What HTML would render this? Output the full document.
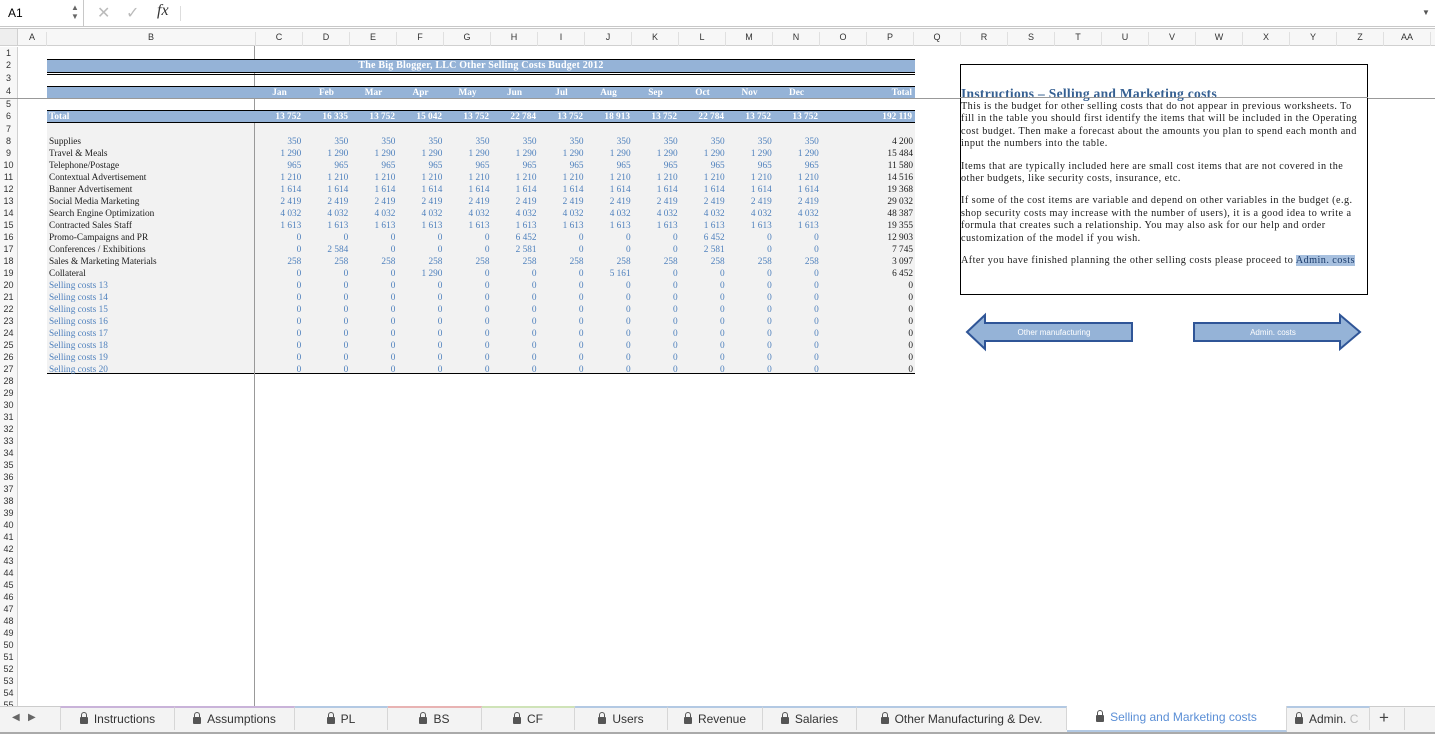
<!DOCTYPE html>
<html><head><meta charset="utf-8"><style>
*{margin:0;padding:0;box-sizing:border-box}
body{width:1435px;height:734px;overflow:hidden;background:#fff;position:relative;font-family:"Liberation Sans",sans-serif}
.a{position:absolute}
.top{left:0;top:0;width:1435px;height:27px;background:#fff;border-bottom:1px solid #c8c8c8}
.colh{left:0;top:28px;width:1435px;height:18px;background:#f7f7f7;border-bottom:1px solid #d0d0d0;border-top:1px solid #c8c8c8}
.colh span{position:absolute;top:3px;font-size:9px;color:#333;width:47px;text-align:center;border-right:1px solid #e0e0e0;height:14px}
.rowh{left:0;width:18px;font-size:9px;color:#333;text-align:center;background:#f7f7f7}
.band{background:#95b3d7;color:#fff;font-family:"Liberation Serif",serif;font-weight:bold;font-size:9.3px}
table{border-collapse:collapse;table-layout:fixed;font-family:"Liberation Serif",serif;font-size:9.3px}
td{height:12px;line-height:12px;padding:0 2px;text-align:right;white-space:nowrap;overflow:hidden;color:#4f81bd}
td.l{text-align:left;color:#1a1a1a}
td.lb{text-align:left;color:#4f81bd}
td.t{color:#1a1a1a}
.ins{font-family:"Liberation Serif",serif;font-size:10.2px;letter-spacing:0.45px;color:#1a1a1a;line-height:12.4px}
.tab{position:absolute;top:706px;height:24px;font-size:12px;color:#333;text-align:center;line-height:22px;border-right:1px solid #d6d6d6}
.lock{display:inline-block;width:8px;height:7px;background:#555;border-radius:1px;position:relative;margin-right:6px;vertical-align:-1px}
.lock:before{content:"";position:absolute;left:1px;top:-5px;width:4px;height:5px;border:1px solid #555;border-bottom:none;border-radius:3px 3px 0 0}
</style></head><body>
<div class="a top">
 <div class="a" style="left:0;top:0;width:84px;height:27px;border-right:1px solid #c8c8c8;font-size:12px;line-height:27px;padding-left:8px">A1</div>
 <div class="a" style="left:71px;top:3px;font-size:8px;color:#666;line-height:9px">▲<br>▼</div>
 <div class="a" style="left:97px;top:3px;font-size:16px;color:#bbb">✕</div>
 <div class="a" style="left:126px;top:3px;font-size:16px;color:#bbb">✓</div>
 <div class="a" style="left:157px;top:2px;font-size:16px;font-style:italic;font-family:'Liberation Serif',serif;color:#333">fx</div>
 <div class="a" style="left:180px;top:6px;width:1px;height:15px;background:#ddd"></div>
 <div class="a" style="left:1422px;top:8px;font-size:8px;color:#555">▼</div>
</div>
<div class="a colh">
 <div class="a" style="left:0;top:0;width:18px;height:16px;background:#eee;border-right:1px solid #d0d0d0"></div>
 <span style="left:18px;width:29px">A</span><span style="left:47px;width:209px">B</span>
 <span style="left:256px">C</span><span style="left:303px">D</span><span style="left:350px">E</span><span style="left:397px">F</span><span style="left:444px">G</span><span style="left:491px">H</span><span style="left:538px">I</span><span style="left:585px">J</span><span style="left:632px">K</span><span style="left:679px">L</span><span style="left:726px">M</span><span style="left:773px">N</span><span style="left:820px">O</span><span style="left:867px">P</span><span style="left:914px">Q</span><span style="left:961px">R</span><span style="left:1008px">S</span><span style="left:1055px">T</span><span style="left:1102px">U</span><span style="left:1149px">V</span><span style="left:1196px">W</span><span style="left:1243px">X</span><span style="left:1290px">Y</span><span style="left:1337px">Z</span><span style="left:1384px">AA</span>
</div>
<div class="a rowh" style="top:47px;height:660px;border-right:1px solid #d0d0d0;line-height:12px">
<div style="height:12px">1</div><div style="height:13px;line-height:13px">2</div><div style="height:13px;line-height:13px">3</div><div style="height:13px;line-height:13px">4</div><div style="height:12px">5</div><div style="height:13px;line-height:13px">6</div><div style="height:12px">7</div>
<div>8</div><div>9</div><div>10</div><div>11</div><div>12</div><div>13</div><div>14</div><div>15</div><div>16</div><div>17</div><div>18</div><div>19</div><div>20</div><div>21</div><div>22</div><div>23</div><div>24</div><div>25</div><div>26</div><div>27</div><div>28</div><div>29</div><div>30</div><div>31</div><div>32</div><div>33</div><div>34</div><div>35</div><div>36</div><div>37</div><div>38</div><div>39</div><div>40</div><div>41</div><div>42</div><div>43</div><div>44</div><div>45</div><div>46</div><div>47</div><div>48</div><div>49</div><div>50</div><div>51</div><div>52</div><div>53</div><div>54</div><div>55</div>
</div>
<div class="a" style="left:254px;top:46px;width:1px;height:660px;background:#999"></div>
<div class="a" style="left:0;top:98px;width:1435px;height:1px;background:#999"></div>
<div class="a band" style="left:47px;top:59px;width:868px;height:13px;border-top:1px solid #000;text-align:center;line-height:12px;font-size:10px;letter-spacing:0.2px">The Big Blogger, LLC Other Selling Costs Budget 2012</div>
<div class="a" style="left:47px;top:72px;width:868px;height:3px;border-top:1px solid #000;border-bottom:1px solid #000"></div>
<div class="a band" style="left:47px;top:86px;width:868px;height:12px;border-top:1px solid #000">
<table style="color:#fff"><colgroup><col style="width:209px"><col span="14" style="width:47px"></colgroup>
<tr><td></td><td style="color:#fff;text-align:center;font-weight:bold">Jan</td><td style="color:#fff;text-align:center;font-weight:bold">Feb</td><td style="color:#fff;text-align:center;font-weight:bold">Mar</td><td style="color:#fff;text-align:center;font-weight:bold">Apr</td><td style="color:#fff;text-align:center;font-weight:bold">May</td><td style="color:#fff;text-align:center;font-weight:bold">Jun</td><td style="color:#fff;text-align:center;font-weight:bold">Jul</td><td style="color:#fff;text-align:center;font-weight:bold">Aug</td><td style="color:#fff;text-align:center;font-weight:bold">Sep</td><td style="color:#fff;text-align:center;font-weight:bold">Oct</td><td style="color:#fff;text-align:center;font-weight:bold">Nov</td><td style="color:#fff;text-align:center;font-weight:bold">Dec</td><td></td><td style="color:#fff;text-align:right;font-weight:bold">Total</td></tr></table></div>
<div class="a band" style="left:47px;top:110px;width:868px;height:13px;border-top:1px solid #000;border-bottom:1px solid #000">
<table><colgroup><col style="width:209px"><col span="14" style="width:47px"></colgroup>
<tr style="font-weight:bold"><td style="color:#fff;text-align:left;line-height:12px">Total</td><td style="color:#fff;line-height:12px">13 752</td><td style="color:#fff;line-height:12px">16 335</td><td style="color:#fff;line-height:12px">13 752</td><td style="color:#fff;line-height:12px">15 042</td><td style="color:#fff;line-height:12px">13 752</td><td style="color:#fff;line-height:12px">22 784</td><td style="color:#fff;line-height:12px">13 752</td><td style="color:#fff;line-height:12px">18 913</td><td style="color:#fff;line-height:12px">13 752</td><td style="color:#fff;line-height:12px">22 784</td><td style="color:#fff;line-height:12px">13 752</td><td style="color:#fff;line-height:12px">13 752</td><td></td><td style="color:#fff;line-height:12px">192 119</td></tr></table></div>
<div class="a" style="left:47px;top:123px;width:868px;height:251px;background:#f2f2f2;border-bottom:1px solid #000"></div>
<table class="a" style="left:47px;top:136px;width:868px"><colgroup><col style="width:209px"><col span="14" style="width:47px"></colgroup>
<tr><td class="l">Supplies</td><td>350</td><td>350</td><td>350</td><td>350</td><td>350</td><td>350</td><td>350</td><td>350</td><td>350</td><td>350</td><td>350</td><td>350</td><td></td><td class="t">4 200</td></tr>
<tr><td class="l">Travel &amp; Meals</td><td>1 290</td><td>1 290</td><td>1 290</td><td>1 290</td><td>1 290</td><td>1 290</td><td>1 290</td><td>1 290</td><td>1 290</td><td>1 290</td><td>1 290</td><td>1 290</td><td></td><td class="t">15 484</td></tr>
<tr><td class="l">Telephone/Postage</td><td>965</td><td>965</td><td>965</td><td>965</td><td>965</td><td>965</td><td>965</td><td>965</td><td>965</td><td>965</td><td>965</td><td>965</td><td></td><td class="t">11 580</td></tr>
<tr><td class="l">Contextual Advertisement</td><td>1 210</td><td>1 210</td><td>1 210</td><td>1 210</td><td>1 210</td><td>1 210</td><td>1 210</td><td>1 210</td><td>1 210</td><td>1 210</td><td>1 210</td><td>1 210</td><td></td><td class="t">14 516</td></tr>
<tr><td class="l">Banner Advertisement</td><td>1 614</td><td>1 614</td><td>1 614</td><td>1 614</td><td>1 614</td><td>1 614</td><td>1 614</td><td>1 614</td><td>1 614</td><td>1 614</td><td>1 614</td><td>1 614</td><td></td><td class="t">19 368</td></tr>
<tr><td class="l">Social Media Marketing</td><td>2 419</td><td>2 419</td><td>2 419</td><td>2 419</td><td>2 419</td><td>2 419</td><td>2 419</td><td>2 419</td><td>2 419</td><td>2 419</td><td>2 419</td><td>2 419</td><td></td><td class="t">29 032</td></tr>
<tr><td class="l">Search Engine Optimization</td><td>4 032</td><td>4 032</td><td>4 032</td><td>4 032</td><td>4 032</td><td>4 032</td><td>4 032</td><td>4 032</td><td>4 032</td><td>4 032</td><td>4 032</td><td>4 032</td><td></td><td class="t">48 387</td></tr>
<tr><td class="l">Contracted Sales Staff</td><td>1 613</td><td>1 613</td><td>1 613</td><td>1 613</td><td>1 613</td><td>1 613</td><td>1 613</td><td>1 613</td><td>1 613</td><td>1 613</td><td>1 613</td><td>1 613</td><td></td><td class="t">19 355</td></tr>
<tr><td class="l">Promo-Campaigns and PR</td><td>0</td><td>0</td><td>0</td><td>0</td><td>0</td><td>6 452</td><td>0</td><td>0</td><td>0</td><td>6 452</td><td>0</td><td>0</td><td></td><td class="t">12 903</td></tr>
<tr><td class="l">Conferences / Exhibitions</td><td>0</td><td>2 584</td><td>0</td><td>0</td><td>0</td><td>2 581</td><td>0</td><td>0</td><td>0</td><td>2 581</td><td>0</td><td>0</td><td></td><td class="t">7 745</td></tr>
<tr><td class="l">Sales &amp; Marketing Materials</td><td>258</td><td>258</td><td>258</td><td>258</td><td>258</td><td>258</td><td>258</td><td>258</td><td>258</td><td>258</td><td>258</td><td>258</td><td></td><td class="t">3 097</td></tr>
<tr><td class="l">Collateral</td><td>0</td><td>0</td><td>0</td><td>1 290</td><td>0</td><td>0</td><td>0</td><td>5 161</td><td>0</td><td>0</td><td>0</td><td>0</td><td></td><td class="t">6 452</td></tr>
<tr><td class="lb">Selling costs 13</td><td>0</td><td>0</td><td>0</td><td>0</td><td>0</td><td>0</td><td>0</td><td>0</td><td>0</td><td>0</td><td>0</td><td>0</td><td></td><td class="t">0</td></tr>
<tr><td class="lb">Selling costs 14</td><td>0</td><td>0</td><td>0</td><td>0</td><td>0</td><td>0</td><td>0</td><td>0</td><td>0</td><td>0</td><td>0</td><td>0</td><td></td><td class="t">0</td></tr>
<tr><td class="lb">Selling costs 15</td><td>0</td><td>0</td><td>0</td><td>0</td><td>0</td><td>0</td><td>0</td><td>0</td><td>0</td><td>0</td><td>0</td><td>0</td><td></td><td class="t">0</td></tr>
<tr><td class="lb">Selling costs 16</td><td>0</td><td>0</td><td>0</td><td>0</td><td>0</td><td>0</td><td>0</td><td>0</td><td>0</td><td>0</td><td>0</td><td>0</td><td></td><td class="t">0</td></tr>
<tr><td class="lb">Selling costs 17</td><td>0</td><td>0</td><td>0</td><td>0</td><td>0</td><td>0</td><td>0</td><td>0</td><td>0</td><td>0</td><td>0</td><td>0</td><td></td><td class="t">0</td></tr>
<tr><td class="lb">Selling costs 18</td><td>0</td><td>0</td><td>0</td><td>0</td><td>0</td><td>0</td><td>0</td><td>0</td><td>0</td><td>0</td><td>0</td><td>0</td><td></td><td class="t">0</td></tr>
<tr><td class="lb">Selling costs 19</td><td>0</td><td>0</td><td>0</td><td>0</td><td>0</td><td>0</td><td>0</td><td>0</td><td>0</td><td>0</td><td>0</td><td>0</td><td></td><td class="t">0</td></tr>
<tr><td class="lb">Selling costs 20</td><td>0</td><td>0</td><td>0</td><td>0</td><td>0</td><td>0</td><td>0</td><td>0</td><td>0</td><td>0</td><td>0</td><td>0</td><td></td><td class="t">0</td></tr>
</table>
<div class="a" style="left:254px;top:123px;width:1px;height:252px;background:#999"></div>
<div class="a ins" style="left:960px;top:64px;width:408px;height:231px;border:1px solid #000;background:#fff;padding:21px 0 0 0">
<div style="color:#366092;font-weight:bold;font-size:13.5px;line-height:15px;letter-spacing:0.3px">Instructions – Selling and Marketing costs</div>
<div>This is the budget for other selling costs that do not appear in previous worksheets. To fill in the table you should first identify the items that will be included in the Operating cost budget. Then make a forecast about the amounts you plan to spend each month and input the numbers into the table.</div>
<div style="margin-top:10px">Items that are typically included here are small cost items that are not covered in the other budgets, like security costs, insurance, etc.</div>
<div style="margin-top:10px">If some of the cost items are variable and depend on other variables in the budget (e.g. shop security costs may increase with the number of users), it is a good idea to write a formula that creates such a relationship. You may also ask for our help and order customization of the model if you wish.</div>
<div style="margin-top:10px">After you have finished planning the other selling costs please proceed to <span style="background:#a7c0df;color:#1a3a6a">Admin. costs</span></div>
</div>
<div class="a" style="left:960px;top:97px;width:408px;height:1px;background:#999"></div>
<svg class="a" style="left:964px;top:312px" width="172" height="40"><path d="M3,20 L21,3 L21,11 L168,11 L168,29 L21,29 L21,37 Z" fill="#95b3d7" stroke="#2f5597" stroke-width="2"/><text x="90" y="23" font-family="Liberation Sans" font-size="8" fill="#fff" text-anchor="middle">Other manufacturing</text></svg>
<svg class="a" style="left:1192px;top:312px" width="172" height="40"><path d="M2,11 L148,11 L148,3 L168,20 L148,37 L148,29 L2,29 Z" fill="#95b3d7" stroke="#2f5597" stroke-width="2"/><text x="81" y="23" font-family="Liberation Sans" font-size="8" fill="#fff" text-anchor="middle">Admin. costs</text></svg>
<div class="a" style="left:0;top:706px;width:1435px;height:28px;background:#f3f3f3;border-top:1px solid #ccc;border-bottom:2px solid #aaa"></div>
<div class="a" style="left:12px;top:712px;font-size:10px;color:#666">◀&nbsp;&nbsp;&nbsp;▶</div>
<div class="tab" style="left:60px;width:115px;border-top:2px solid #c9b3d9;border-left:1px solid #d6d6d6"><span class="lock"></span>Instructions</div>
<div class="tab" style="left:175px;width:120px;border-top:2px solid #c9b3d9"><span class="lock"></span>Assumptions</div>
<div class="tab" style="left:295px;width:93px;border-top:2px solid #b3c9e3"><span class="lock"></span>PL</div>
<div class="tab" style="left:388px;width:94px;border-top:2px solid #e8b3b3"><span class="lock"></span>BS</div>
<div class="tab" style="left:482px;width:93px;border-top:2px solid #cfe3b8"><span class="lock"></span>CF</div>
<div class="tab" style="left:575px;width:93px;border-top:2px solid #b3c9e3"><span class="lock"></span>Users</div>
<div class="tab" style="left:668px;width:95px;border-top:2px solid #b3c9e3"><span class="lock"></span>Revenue</div>
<div class="tab" style="left:763px;width:94px;border-top:2px solid #b3c9e3"><span class="lock"></span>Salaries</div>
<div class="tab" style="left:857px;width:210px;border-top:2px solid #b3c9e3"><span class="lock"></span>Other Manufacturing &amp; Dev.</div>
<div class="tab" style="left:1067px;width:220px;background:#fff;color:#5b8fd6;height:26px;border-bottom:2px solid #b3c9e3"><span class="lock"></span>Selling and Marketing costs</div>
<div class="tab" style="left:1287px;width:83px;border-top:2px solid #b3c9e3;text-align:left;padding-left:8px;overflow:hidden"><span class="lock"></span>Admin. <span style="color:#bbb">C</span></div>
<div class="a" style="left:1379px;top:708px;font-size:17px;color:#444">+</div>
<div class="a" style="left:1404px;top:708px;width:1px;height:22px;background:#d6d6d6"></div>
</body></html>
